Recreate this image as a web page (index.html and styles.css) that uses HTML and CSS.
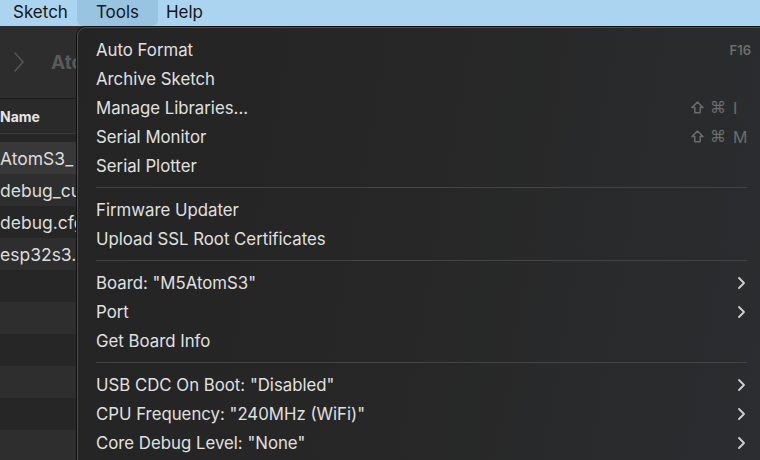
FILE: index.html
```html
<!DOCTYPE html>
<html>
<head>
<meta charset="utf-8">
<link rel="stylesheet" href="styles.css">
</head>
<body>
<div class="screen">
  <div class="menubar">
    <span class="mb-item mb-sketch">Sketch</span>
    <span class="mb-item mb-tools">Tools</span>
    <span class="mb-item mb-help">Help</span>
  </div>
  <div class="app">
    <div class="toolbar">
      <svg class="nav-chev" width="12" height="22" viewBox="0 0 12 22"><path d="M2 2 L10 11 L2 20" fill="none" stroke="#555" stroke-width="1.6" stroke-linecap="round" stroke-linejoin="round"/></svg>
      <span class="crumb">Ato</span>
    </div>
    <div class="list-head">Name</div>
    <div class="rows">
      <div class="row sel">AtomS3_</div>
      <div class="row alt">debug_cu</div>
      <div class="row">debug.cfg</div>
      <div class="row alt">esp32s3.</div>
      <div class="row"></div>
      <div class="row alt"></div>
      <div class="row"></div>
      <div class="row alt"></div>
      <div class="row"></div>
      <div class="row alt"></div>
    </div>
  </div>

  <div class="menu">
    <div class="mi"><span class="lbl">Auto Format</span><span class="sc sc-r">F16</span></div>
    <div class="mi"><span class="lbl">Archive Sketch</span></div>
    <div class="mi"><span class="lbl">Manage Libraries...</span><span class="sc"><svg class="shift" width="13" height="13" viewBox="0 0 13 13"><path d="M6.5 1 L12 6.6 L9.2 6.6 L9.2 11.8 L3.8 11.8 L3.8 6.6 L1 6.6 Z" fill="none" stroke="#6c6c6c" stroke-width="1.5" stroke-linejoin="round"/></svg><span class="cmd">⌘</span><span class="key">I</span></span></div>
    <div class="mi"><span class="lbl">Serial Monitor</span><span class="sc"><svg class="shift" width="13" height="13" viewBox="0 0 13 13"><path d="M6.5 1 L12 6.6 L9.2 6.6 L9.2 11.8 L3.8 11.8 L3.8 6.6 L1 6.6 Z" fill="none" stroke="#6c6c6c" stroke-width="1.5" stroke-linejoin="round"/></svg><span class="cmd">⌘</span><span class="key">M</span></span></div>
    <div class="mi"><span class="lbl">Serial Plotter</span></div>
    <div class="sep"></div>
    <div class="mi"><span class="lbl">Firmware Updater</span></div>
    <div class="mi"><span class="lbl">Upload SSL Root Certificates</span></div>
    <div class="sep"></div>
    <div class="mi"><span class="lbl">Board: "M5AtomS3"</span><svg class="chev" width="10" height="14" viewBox="0 0 10 14"><path d="M3 2 L8 7 L3 12" fill="none" stroke="#d0d0d0" stroke-width="1.8" stroke-linecap="round" stroke-linejoin="round"/></svg></div>
    <div class="mi"><span class="lbl">Port</span><svg class="chev" width="10" height="14" viewBox="0 0 10 14"><path d="M3 2 L8 7 L3 12" fill="none" stroke="#d0d0d0" stroke-width="1.8" stroke-linecap="round" stroke-linejoin="round"/></svg></div>
    <div class="mi"><span class="lbl">Get Board Info</span></div>
    <div class="sep"></div>
    <div class="mi"><span class="lbl">USB CDC On Boot: "Disabled"</span><svg class="chev" width="10" height="14" viewBox="0 0 10 14"><path d="M3 2 L8 7 L3 12" fill="none" stroke="#d0d0d0" stroke-width="1.8" stroke-linecap="round" stroke-linejoin="round"/></svg></div>
    <div class="mi"><span class="lbl">CPU Frequency: "240MHz (WiFi)"</span><svg class="chev" width="10" height="14" viewBox="0 0 10 14"><path d="M3 2 L8 7 L3 12" fill="none" stroke="#d0d0d0" stroke-width="1.8" stroke-linecap="round" stroke-linejoin="round"/></svg></div>
    <div class="mi"><span class="lbl">Core Debug Level: "None"</span><svg class="chev" width="10" height="14" viewBox="0 0 10 14"><path d="M3 2 L8 7 L3 12" fill="none" stroke="#d0d0d0" stroke-width="1.8" stroke-linecap="round" stroke-linejoin="round"/></svg></div>
  </div>
</div>
</body>
</html>
```
FILE: styles.css
```css
html, body {
  margin: 0;
  padding: 0;
  background: #2d2d2d;
}
.screen {
  position: relative;
  width: 760px;
  height: 460px;
  overflow: hidden;
  background: #2d2d2d;
  font-family: Inter, "Liberation Sans", sans-serif;
}
.menubar {
  height: 26px;
  background: #aad4f0;
  display: flex;
  align-items: stretch;
}
.mb-item {
  display: flex;
  align-items: center;
  padding-bottom: 2px;
  font-size: 17px;
  color: #161616;
}
.mb-sketch {
  padding-left: 13px;
  padding-right: 9px;
}
.mb-tools {
  width: 81px;
  box-sizing: border-box;
  padding-left: 19px;
  background: #98c4e1;
  border-radius: 0 0 6px 6px;
}
.mb-help {
  padding-left: 8px;
}
.app {
  width: 77px;
  overflow: hidden;
  display: flex;
  flex-direction: column;
}
.toolbar {
  height: 72px;
  background: #2d2d2d;
  border-bottom: 1px solid #1b1b1b;
  display: flex;
  align-items: center;
  padding-left: 13px;
  gap: 26px;
  white-space: nowrap;
}
.nav-chev {
  flex: none;
}
.crumb {
  font-size: 19px;
  font-weight: 700;
  color: #5a5a5a;
}
.list-head {
  height: 34px;
  background: #2a2a2a;
  border-bottom: 1px solid #3a3a3a;
  display: flex;
  align-items: center;
  font-size: 14px;
  font-weight: 700;
  color: #e6e6e6;
}
.rows {
  padding-top: 8px;
  background: #262626;
}
.row {
  height: 32px;
  display: flex;
  align-items: center;
  font-size: 17.5px;
  color: #dcdcdc;
  white-space: nowrap;
  background: #262626;
}
.row.alt {
  background: #2e2e2e;
}
.row.sel {
  background: #383838;
}
.menu {
  position: absolute;
  left: 77px;
  top: 27px;
  width: 692px;
  height: 460px;
  box-sizing: border-box;
  border: 1px solid #4c4c4c;
  border-radius: 9px;
  background: linear-gradient(100deg, #242424 0%, #272727 50%, #2b2d30 100%);
  padding: 7px 17px 0 18px;
  box-shadow: 0 0 0 1px #111;
}
.mi {
  height: 29px;
  display: flex;
  align-items: center;
  font-size: 16.8px;
  color: #e0e0e0;
  white-space: nowrap;
}
.lbl {
  flex: 1;
}
.sc {
  width: 60px;
  display: flex;
  align-items: center;
  color: #6c6c6c;
}
.shift {
  flex: none;
  margin-right: 6px;
}
.cmd {
  font-family: "DejaVu Sans", sans-serif;
  font-size: 16px;
  margin-right: 7px;
}
.key {
  font-size: 16px;
}
.sc-r {
  justify-content: flex-end;
  font-size: 13px;
  font-weight: 600;
}
.chev {
  margin-right: 5px;
}
.sep {
  height: 1px;
  background: #444;
  margin: 7px 4px 7px 0;
}
```
